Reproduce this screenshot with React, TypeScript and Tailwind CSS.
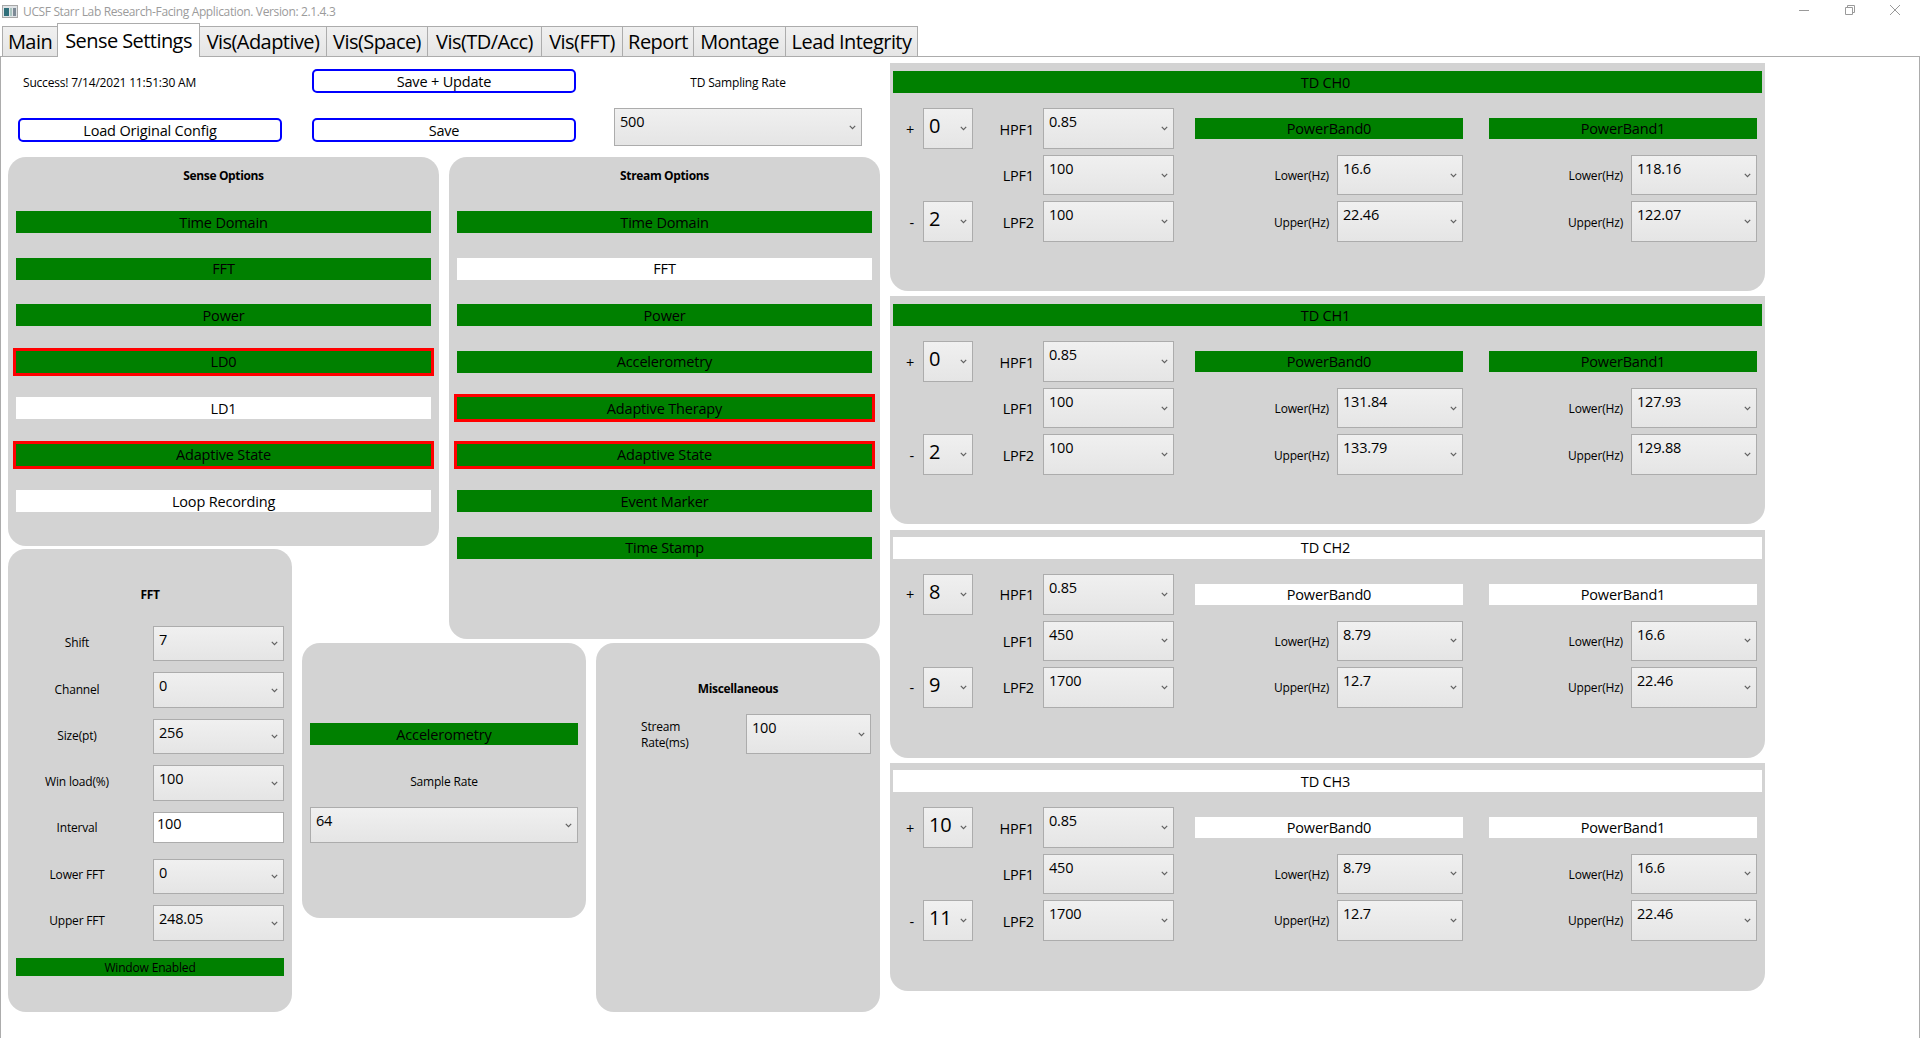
import React from "react";

function Chevron() {
  return (
    <svg width="7" height="5" viewBox="0 0 7 5" className="shrink-0" fill="none">
      <path d="M0.8 0.8 L3.5 3.6 L6.2 0.8" stroke="#606060" strokeWidth="1.2" />
    </svg>
  );
}

function Sel({ v, cls, big }: { v: string; cls: string; big?: boolean }) {
  return (
    <div className={`flex justify-between items-center border border-[#acacac] bg-gradient-to-b from-[#f0f0f0] to-[#e5e5e5] pr-[5px] ${cls}`}>
      <span className={big ? "self-start pl-[5px] pt-[3px] text-[20px] leading-[27px]" : "self-start pl-[5px] pt-[3px] text-[14.5px] leading-[20px]"}>{v}</span>
      <Chevron />
    </div>
  );
}

function Bar({ t, on, red, cls = "h-[22px]", text = "text-[14.5px]" }: { t: string; on?: boolean; red?: boolean; cls?: string; text?: string }) {
  return (
    <div className={`flex items-center justify-center shrink-0 pt-[1px] ${cls} ${text} ${on ? "bg-[#008000]" : "bg-white"} ${red ? "outline-3 outline-[#ff0000]" : ""}`}>
      {t}
    </div>
  );
}

function Lbl({ t, cls }: { t: string; cls: string }) {
  return <div className={`flex items-center justify-end pt-[2px] ${cls}`}>{t}</div>;
}

type Ch = { name: string; on: boolean; top: string; p: string; m: string; hp: string; l1: string; l2: string; a: string[]; b: string[] };

function Channel({ c }: { c: Ch }) {
  return (
    <div className={`h-[228px] bg-[#d3d3d3] rounded-b-[18px] px-[3px] shrink-0 ${c.top}`}>
      <Bar t={c.name} on={c.on} cls="h-[22px] pr-[4px]" />
      <div className="grid mt-[15px] grid-cols-[30px_50px_61px_9px_131px_21px_134px_8px_126px_26px_134px_8px_126px] grid-rows-[41px_40px_41px] gap-y-[6px]">
        <Lbl t="+" cls="col-[1] row-[1] pr-[9px] text-[14.5px]" />
        <Sel v={c.p} big cls="col-[2] row-[1]" />
        <Lbl t="HPF1" cls="col-[3] row-[1] text-[14.5px]" />
        <Sel v={c.hp} cls="col-[5] row-[1]" />
        <div className="col-[7/10] row-[1] self-center"><Bar t="PowerBand0" on={c.on} cls="h-[21px]" /></div>
        <div className="col-[11/14] row-[1] self-center"><Bar t="PowerBand1" on={c.on} cls="h-[21px]" /></div>
        <Lbl t="LPF1" cls="col-[3] row-[2] text-[14.5px]" />
        <Sel v={c.l1} cls="col-[5] row-[2]" />
        <Lbl t="Lower(Hz)" cls="col-[7] row-[2] text-[12px]" />
        <Sel v={c.a[0]} cls="col-[9] row-[2]" />
        <Lbl t="Lower(Hz)" cls="col-[11] row-[2] text-[12px]" />
        <Sel v={c.b[0]} cls="col-[13] row-[2]" />
        <Lbl t="-" cls="col-[1] row-[3] pr-[9px] text-[14.5px]" />
        <Sel v={c.m} big cls="col-[2] row-[3]" />
        <Lbl t="LPF2" cls="col-[3] row-[3] text-[14.5px]" />
        <Sel v={c.l2} cls="col-[5] row-[3]" />
        <Lbl t="Upper(Hz)" cls="col-[7] row-[3] text-[12px]" />
        <Sel v={c.a[1]} cls="col-[9] row-[3]" />
        <Lbl t="Upper(Hz)" cls="col-[11] row-[3] text-[12px]" />
        <Sel v={c.b[1]} cls="col-[13] row-[3]" />
      </div>
    </div>
  );
}

const channels: Ch[] = [
  { name: "TD CH0", on: true, top: "pt-[8px]", p: "0", m: "2", hp: "0.85", l1: "100", l2: "100", a: ["16.6", "22.46"], b: ["118.16", "122.07"] },
  { name: "TD CH1", on: true, top: "pt-[8px]", p: "0", m: "2", hp: "0.85", l1: "100", l2: "100", a: ["131.84", "133.79"], b: ["127.93", "129.88"] },
  { name: "TD CH2", on: false, top: "pt-[7px]", p: "8", m: "9", hp: "0.85", l1: "450", l2: "1700", a: ["8.79", "12.7"], b: ["16.6", "22.46"] },
  { name: "TD CH3", on: false, top: "pt-[7px]", p: "10", m: "11", hp: "0.85", l1: "450", l2: "1700", a: ["8.79", "12.7"], b: ["16.6", "22.46"] },
];

const tabs: [string, string][] = [
  ["Main", "w-[56px]"],
  ["Sense Settings", "w-[143px]"],
  ["Vis(Adaptive)", "w-[128px]"],
  ["Vis(Space)", "w-[102px]"],
  ["Vis(TD/Acc)", "w-[115px]"],
  ["Vis(FFT)", "w-[82px]"],
  ["Report", "w-[72px]"],
  ["Montage", "w-[93px]"],
  ["Lead Integrity", "w-[133px]"],
];

const sense: [string, boolean, boolean][] = [
  ["Time Domain", true, false],
  ["FFT", true, false],
  ["Power", true, false],
  ["LD0", true, true],
  ["LD1", false, false],
  ["Adaptive State", true, true],
  ["Loop Recording", false, false],
];

const stream: [string, boolean, boolean][] = [
  ["Time Domain", true, false],
  ["FFT", false, false],
  ["Power", true, false],
  ["Accelerometry", true, false],
  ["Adaptive Therapy", true, true],
  ["Adaptive State", true, true],
  ["Event Marker", true, false],
  ["Time Stamp", true, false],
];

const fft: { l: string; v: string; h: string; mt: string; input?: boolean; lb: string }[] = [
  { l: "Shift", v: "7", h: "h-[35px]", mt: "mt-[0px]", lb: "pb-[2px]" },
  { l: "Channel", v: "0", h: "h-[36px]", mt: "mt-[11px]", lb: "pb-[1px]" },
  { l: "Size(pt)", v: "256", h: "h-[35px]", mt: "mt-[11px]", lb: "pb-[2px]" },
  { l: "Win load(%)", v: "100", h: "h-[36px]", mt: "mt-[11px]", lb: "pb-[2px]" },
  { l: "Interval", v: "100", h: "h-[31px]", mt: "mt-[11px]", input: true, lb: "pb-0" },
  { l: "Lower FFT", v: "0", h: "h-[35px]", mt: "mt-[16px]", lb: "pb-[4px]" },
  { l: "Upper FFT", v: "248.05", h: "h-[36px]", mt: "mt-[11px]", lb: "pb-[4px]" },
];

function OptionPanel({ title, items, cls }: { title: string; items: [string, boolean, boolean][]; cls: string }) {
  return (
    <div className={`bg-[#d3d3d3] rounded-[18px] px-[8px] pt-[10px] ${cls}`}>
      <div className="h-[18px] flex items-center justify-center text-[12px] font-bold tracking-[-0.03em]">{title}</div>
      <div className="flex flex-col gap-[24.5px] mt-[26px]">
        {items.map(([t, on, red]) => (
          <Bar key={t} t={t} on={on} red={red} />
        ))}
      </div>
    </div>
  );
}

const btn = "w-full h-[24px] border-2 border-[#0000ff] rounded-[5px] bg-white text-[14.5px] flex items-center justify-center pt-[1px]";

export default function App() {
  return (
    <div className="h-screen w-full overflow-hidden bg-white text-black font-['Open_Sans','Noto_Sans',sans-serif] tracking-[-0.011em]">
      <div className="h-[23px] flex items-center pl-[2px] text-[12px] text-[#9b9b9b]">
        <svg width="16" height="13" viewBox="0 0 16 13" className="mr-[5px]">
          <rect x="0.5" y="0.5" width="15" height="12" fill="#dfe3e6" stroke="#a8a8a8" />
          <rect x="2" y="3" width="5" height="8" fill="#2f6f7a" />
          <rect x="8" y="3" width="2" height="8" fill="#a9c4c0" />
          <rect x="11" y="3" width="3" height="8" fill="#7d8a96" />
        </svg>
        <span className="tracking-[-0.03em]">UCSF Starr Lab Research-Facing Application. Version: 2.1.4.3</span>
        <div className="ml-auto flex items-center pr-[20px] gap-[35.5px] mb-[4px]">
          <svg width="10" height="10" viewBox="0 0 10 10" fill="none"><path d="M0 5.5H10" stroke="#9a9a9a" /></svg>
          <svg width="10" height="10" viewBox="0 0 10 10" fill="none"><path d="M0.5 2.5H7.5V9.5H0.5Z M2.5 2.5V0.5H9.5V7.5H7.5" stroke="#9a9a9a" /></svg>
          <svg width="10" height="10" viewBox="0 0 10 10" fill="none"><path d="M0 0L10 10M10 0L0 10" stroke="#9a9a9a" /></svg>
        </div>
      </div>
      <div className="flex h-[34px] items-end pl-[2px] relative z-10 -mb-[1px] tracking-[-0.035em]">
        {tabs.map(([t, w], i) =>
          i === 1 ? (
            <div key={t} className={`h-[34px] ${w} flex items-center justify-center bg-white border-x border-t border-[#acacac] text-[20px] leading-none -ml-[1px]`}>{t}</div>
          ) : (
            <div key={t} className={`h-[31px] ${w} flex items-center justify-center border border-[#acacac] bg-gradient-to-b from-[#f0f0f0] to-[#e5e5e5] text-[20px] leading-none ${i > 0 ? "-ml-[1px]" : ""}`}>{t}</div>
          )
        )}
      </div>
      <div className="border-x border-t border-[#acacac] h-[982px] flex pl-[7px]">
        <div className="w-[872px] shrink-0 flex flex-col">
          <div className="h-[100px] flex pl-[10px] shrink-0">
            <div className="w-[264px] pt-[12px]">
              <div className="h-[27px] pl-[5px] flex items-center text-[12px] tracking-[-0.016em]">Success! 7/14/2021 11:51:30 AM</div>
              <button className={`${btn} mt-[22px]`}>Load Original Config</button>
            </div>
            <div className="w-[264px] ml-[30px] pt-[12px]">
              <button className={btn}>Save + Update</button>
              <button className={`${btn} mt-[25px]`}>Save</button>
            </div>
            <div className="w-[248px] ml-[38px] pt-[12px]">
              <div className="h-[27px] flex items-center justify-center text-[12px]">TD Sampling Rate</div>
              <Sel v="500" cls="h-[38px] mt-[12px]" />
            </div>
          </div>
          <div className="grid grid-cols-[284px_10px_137px_10px_137px_10px_284px] grid-rows-[389px_3px_90px_4px_275px_94px]">
            <OptionPanel title="Sense Options" items={sense} cls="col-[1/4] row-[1]" />
            <OptionPanel title="Stream Options" items={stream} cls="col-[5/8] row-[1/4]" />
            <div className="col-[1] row-[3/7] bg-[#d3d3d3] rounded-[18px] px-[8px] pt-[37px]">
              <div className="h-[18px] flex items-center justify-center text-[12px] font-bold tracking-[-0.03em]">FFT</div>
              <div className="mt-[22px] flex flex-col">
                {fft.map((f) => (
                  <div key={f.l} className={`flex ${f.mt}`}>
                    <div className={`w-[137px] pr-[15px] flex items-center justify-center text-[12px] ${f.lb}`}>{f.l}</div>
                    {f.input ? (
                      <div className={`flex-1 ${f.h} bg-white border border-[#acacac] pl-[3px] pt-[1px] text-[14.5px] leading-[20px]`}>{f.v}</div>
                    ) : (
                      <Sel v={f.v} cls={`flex-1 ${f.h}`} />
                    )}
                  </div>
                ))}
              </div>
              <Bar t="Window Enabled" on cls="h-[18px] mt-[17px]" text="text-[12px]" />
            </div>
            <div className="col-[3/6] row-[5] bg-[#d3d3d3] rounded-[18px] px-[8px] pt-[80px]">
              <Bar t="Accelerometry" on />
              <div className="h-[18px] mt-[28px] flex items-center justify-center text-[12px]">Sample Rate</div>
              <Sel v="64" cls="h-[36px] mt-[16px]" />
            </div>
            <div className="col-[7] row-[5/7] bg-[#d3d3d3] rounded-[18px] pt-[37px]">
              <div className="h-[18px] flex items-center justify-center text-[12px] font-bold tracking-[-0.03em]">Miscellaneous</div>
              <div className="flex mt-[16px] pl-[45px]">
                <div className="w-[105px] pt-[5px] text-[12px] leading-[16px]">Stream<br />Rate(ms)</div>
                <Sel v="100" cls="w-[125px] h-[40px]" />
              </div>
            </div>
          </div>
        </div>
        <div className="ml-[10px] w-[875px] pt-[6px] flex flex-col gap-[5.33px]">
          {channels.map((c) => (
            <Channel key={c.name} c={c} />
          ))}
        </div>
      </div>
    </div>
  );
}
